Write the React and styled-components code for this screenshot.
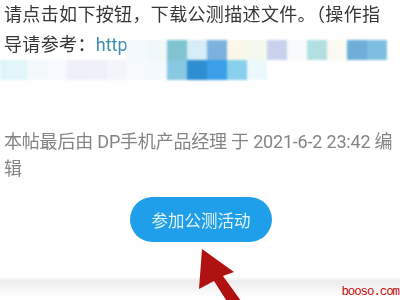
import React from "react";
import styled, { createGlobalStyle } from "styled-components";

const Global = createGlobalStyle`
  html, body { margin: 0; padding: 0; background: #fff; }
  body { width: 400px; height: 300px; overflow: hidden; }
  #root { width: 400px; height: 300px; }
`;

const Page = styled.div`
  position: relative;
  width: 400px;
  height: 300px;
  overflow: hidden;
  background: #ffffff;
  font-family: Roboto, "Noto Sans CJK SC", sans-serif;
  display: flex;
  flex-direction: column;
`;

const Body = styled.div`
  padding: 0 0 0 4px;
  display: flex;
  flex-direction: column;
`;

const Para = styled.div`
  font-size: 18px;
  line-height: 30px;
  color: #363636;
  white-space: nowrap;
  letter-spacing: 0.35px;
  filter: blur(0.45px);
`;

const Link = styled.span`
  color: #3d8db5;
  letter-spacing: 0;
`;

const Note = styled.div`
  margin-top: ${(p) => (p.$first ? "68px" : "0")};
  font-size: 18px;
  line-height: 27px;
  color: #848484;
  white-space: nowrap;
  letter-spacing: -0.2px;
  filter: blur(0.45px);
`;

const ButtonRow = styled.div`
  display: flex;
  justify-content: center;
  padding-left: 2px;
  margin-top: 15px;
`;

const Button = styled.div`
  width: 142px;
  height: 45px;
  border-radius: 23px;
  background: #1f9fe9;
  color: #e4f3f2;
  font-size: 16.5px;
  display: flex;
  align-items: center;
  justify-content: center;
  filter: blur(0.4px);
`;

const Footer = styled.div`
  margin-top: 35px;
  flex: 1;
  background: linear-gradient(#ffffff 0px, #ececec 4px, #f3f3f3 10px, #fdfdfd 18px, #ffffff 22px);
`;

const Mosaic = styled.svg`
  position: absolute;
  left: 0;
  top: 40px;
  filter: blur(1px);
`;

const Arrow = styled.svg`
  position: absolute;
  left: 0;
  top: 0;
  filter: blur(0.6px);
`;

const Watermark = styled.div`
  position: absolute;
  right: 1px;
  bottom: 1px;
  font-family: "Liberation Mono", monospace;
  font-size: 12.5px;
  letter-spacing: -1.1px;
  color: #c40a0a;
`;

const row1 = {
  7: "#f3f9fc", 8: "#f1f8fa", 9: "#7fc4d0", 10: "#d6ecf6", 11: "#7eb2de",
  12: "#fbf8ea", 13: "#f4f8ee", 14: "#c8d2ec", 15: "#f8fafc", 16: "#b2e0e2",
  17: "#fafaf2", 18: "#6eaed8", 19: "#7ebee0",
};
const row2 = {
  0: "#ddf5fa", 1: "#e2f6fa", 2: "#f4fafc", 3: "#f6f9fd", 4: "#eeeff8",
  5: "#eff1fa", 6: "#f3f5fa", 7: "#f7fafc", 8: "#f3f9fc", 9: "#88c8e2",
  10: "#2e8ed2", 11: "#3a9ee8", 12: "#88d0ec", 13: "#ecf9fc",
};

function MosaicCells() {
  const cells = [];
  Object.entries(row1).forEach(([i, c]) =>
    cells.push(<rect key={"a" + i} x={-13 + 20 * i} y={0} width={20} height={20} fill={c} />)
  );
  Object.entries(row2).forEach(([i, c]) =>
    cells.push(<rect key={"b" + i} x={-13 + 20 * i} y={20} width={20} height={20} fill={c} />)
  );
  return (
    <Mosaic width="400" height="40" viewBox="0 0 400 40">
      {cells}
    </Mosaic>
  );
}

export default function App() {
  return (
    <>
      <Global />
      <Page>
        <Body>
          <Para>请点击如下按钮，下载公测描述文件。（操作指</Para>
          <Para>
            导请参考：<Link>http</Link>
          </Para>
          <Note $first>本帖最后由 DP手机产品经理 于 2021-6-2 23:42 编</Note>
          <Note>辑</Note>
        </Body>
        <ButtonRow>
          <Button>参加公测活动</Button>
        </ButtonRow>
        <Footer />
        <MosaicCells />
        <Arrow width="400" height="300" viewBox="0 0 400 300">
          <polygon
            points="202,249 234,272 223,276 244,305 233,311 214,281 199,289"
            fill="#b01212"
          />
        </Arrow>
        <Watermark>booso.com</Watermark>
      </Page>
    </>
  );
}
